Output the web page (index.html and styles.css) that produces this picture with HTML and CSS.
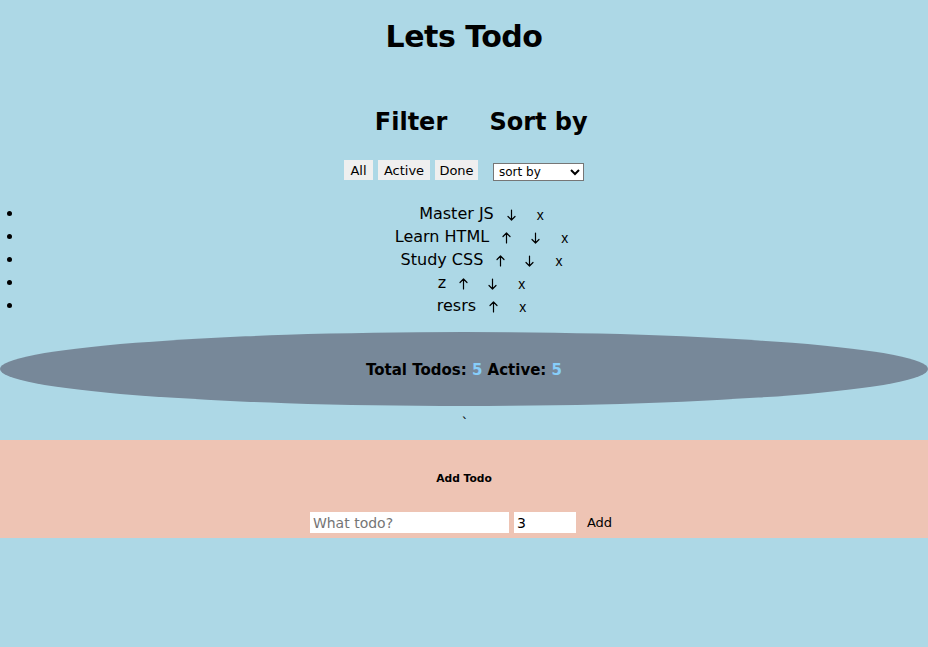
FILE: index.html
```html
<!DOCTYPE html>
<html lang="en">
<head>
<meta charset="utf-8">
<title>Lets Todo</title>
<link rel="stylesheet" href="styles.css">
</head>
<body>
<h1 class="title">Lets Todo</h1>
<div class="controls">
  <div class="col filter-col">
    <h2 class="col-title">Filter</h2>
    <div class="btn-row">
      <button class="fbtn fbtn-all">All</button>
      <button class="fbtn fbtn-active">Active</button>
      <button class="fbtn fbtn-done">Done</button>
    </div>
  </div>
  <div class="col sort-col">
    <h2 class="col-title">Sort by</h2>
    <div class="btn-row">
      <select class="sort-select"><option>sort by</option><option>priority</option><option>name</option></select>
    </div>
  </div>
</div>
<ul class="todo-list">
  <li class="todo">Master JS <button class="ibtn" aria-label="down"><svg class="arr" viewBox="0 0 9 12"><path d="M4.5 1V11M1 7.5L4.5 11L8 7.5"/></svg></button><button class="ibtn xbtn">x</button></li>
  <li class="todo">Learn HTML <button class="ibtn" aria-label="up"><svg class="arr" viewBox="0 0 9 12"><path d="M4.5 11V1M1 4.5L4.5 1L8 4.5"/></svg></button><button class="ibtn" aria-label="down"><svg class="arr" viewBox="0 0 9 12"><path d="M4.5 1V11M1 7.5L4.5 11L8 7.5"/></svg></button><button class="ibtn xbtn">x</button></li>
  <li class="todo">Study CSS <button class="ibtn" aria-label="up"><svg class="arr" viewBox="0 0 9 12"><path d="M4.5 11V1M1 4.5L4.5 1L8 4.5"/></svg></button><button class="ibtn" aria-label="down"><svg class="arr" viewBox="0 0 9 12"><path d="M4.5 1V11M1 7.5L4.5 11L8 7.5"/></svg></button><button class="ibtn xbtn">x</button></li>
  <li class="todo">z <button class="ibtn" aria-label="up"><svg class="arr" viewBox="0 0 9 12"><path d="M4.5 11V1M1 4.5L4.5 1L8 4.5"/></svg></button><button class="ibtn" aria-label="down"><svg class="arr" viewBox="0 0 9 12"><path d="M4.5 1V11M1 7.5L4.5 11L8 7.5"/></svg></button><button class="ibtn xbtn">x</button></li>
  <li class="todo">resrs <button class="ibtn" aria-label="up"><svg class="arr" viewBox="0 0 9 12"><path d="M4.5 11V1M1 4.5L4.5 1L8 4.5"/></svg></button><button class="ibtn xbtn">x</button></li>
</ul>
<div class="stats">Total Todos: <span class="num">5</span> Active: <span class="num">5</span></div>
<div class="tick">`</div>
<section class="add-section">
  <h6 class="add-title">Add Todo</h6>
  <div class="add-row">
    <input class="todo-input" type="text" placeholder="What todo?">
    <input class="prio-input" type="number" value="3">
    <button class="add-btn">Add</button>
  </div>
</section>
</body>
</html>
```
FILE: styles.css
```css
* { box-sizing: border-box; }
html, body {
  margin: 0;
  background: #add8e6;
}
body {
  font-family: "Comic Sans MS", "DejaVu Sans", sans-serif;
  color: #000;
}
.title {
  margin: 17px 0 0;
  font-size: 30px;
  line-height: 40px;
  text-align: center;
  font-weight: bold;
  letter-spacing: -0.5px;
}
.controls {
  display: flex;
  justify-content: center;
  gap: 15px;
  margin-top: 50px;
}
.col {
  display: flex;
  flex-direction: column;
  align-items: center;
}
.filter-col { width: 134px; }
.sort-col { width: 91px; }
.col-title {
  margin: 0;
  font-size: 24px;
  line-height: 30px;
  font-weight: bold;
  white-space: nowrap;
}
.btn-row {
  margin-top: 23px;
  height: 20px;
  display: flex;
  align-items: center;
  gap: 5px;
  justify-content: center;
}
.fbtn {
  height: 20px;
  padding: 0;
  border: none;
  background: #efefef;
  font-family: inherit;
  font-size: 13px;
  color: #000;
}
.fbtn-all { width: 29px; }
.fbtn-active { width: 52px; }
.fbtn-done { width: 43px; }
.sort-select {
  margin-top: 4px;
  width: 91px;
  height: 18px;
  font-family: "DejaVu Sans", sans-serif;
  font-size: 12px;
  background: #fff;
  border: 1px solid #767676;
  border-radius: 0;
  padding: 0 1px;
  color: #000;
}
.todo-list {
  margin: 22px 0 0;
  padding: 0 0 0 24px;
  list-style: disc;
}
.todo {
  text-align: center;
  font-size: 16px;
  line-height: 23px;
  padding-left: 20px;
}
.ibtn {
  display: inline-block;
  width: 25px;
  height: 20px;
  margin-left: 4px;
  padding: 0;
  border: none;
  background: none;
  font-family: "Liberation Sans", sans-serif;
  font-size: 14px;
  line-height: 20px;
  color: #000;
  vertical-align: middle;
}
.ibtn:first-of-type { margin-left: 0; }
.arr {
  display: block;
  width: 9px;
  height: 12px;
  margin: 1px auto 0;
  fill: none;
  stroke: #000;
  stroke-width: 1.2;
  stroke-linecap: round;
  stroke-linejoin: round;
}
.xbtn { font-size: 14px; }
.stats {
  margin-top: 15px;
  height: 74px;
  width: 928px;
  background: #778899;
  border-radius: 50%;
  display: flex;
  align-items: center;
  justify-content: center;
  font-weight: bold;
  font-size: 15px;
  white-space: pre;
  padding-top: 2px;
}
.num { color: #87cefa; }
.tick {
  height: 34px;
  text-align: center;
  font-size: 14px;
  line-height: 34px;
  padding-left: 2px;
}
.add-section {
  background: #eec4b4;
  height: 98px;
  text-align: center;
  padding-top: 31px;
}
.add-title {
  margin: 0;
  font-size: 10.7px;
  line-height: 16px;
  font-weight: bold;
}
.add-row {
  margin-top: 25px;
  display: flex;
  justify-content: center;
  align-items: center;
  gap: 5px;
}
.todo-input, .prio-input {
  height: 21px;
  border: none;
  background: #fff;
  font-family: "DejaVu Sans", sans-serif;
  font-size: 14px;
  padding: 0 3px;
  color: #000;
}
.todo-input { width: 199px; }
.todo-input::placeholder { color: #757575; }
.prio-input { width: 62px; }
.add-btn {
  margin-left: 0;
  border: none;
  background: none;
  font-family: inherit;
  font-size: 13px;
  padding: 0 6px;
  color: #000;
}
```
